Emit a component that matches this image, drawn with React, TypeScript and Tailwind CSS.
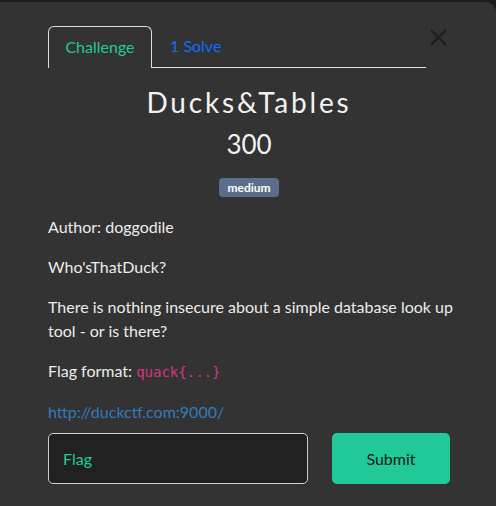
import React from "react";

export default function App() {
  return (
    <div className="w-[496px] h-[506px] bg-[#1b1b1b] overflow-hidden" style={{ fontFamily: "Lato, 'Noto Sans', sans-serif" }}>
      <div className="h-[2px] bg-[#1e1e1e]" />
      <div className="bg-[#333333] h-[504px] rounded-tr-[10px] pl-12 pr-[46px] pt-6">
        <div className="flex items-start">
          <div className="w-[378px] flex items-end border-b border-[#dedede]">
            <div className="border border-b-0 border-[#dedede] rounded-t-[6px] px-[16px] pt-[8px] pb-[9px] text-[16px] leading-6 text-[#20c997] -mb-px bg-[#333333] w-[104px] text-center">
              Challenge
            </div>
            <div className="pl-[18px] pr-4 pt-[8px] pb-[9px] text-[16px] leading-6 text-[#0d6efd]">1 Solve</div>
          </div>
          <div className="ml-1 mt-[3px] w-[17px] h-[17px] text-[#1e1e1e]">
            <svg viewBox="0 0 17 17" width="17" height="17" fill="none" stroke="currentColor" strokeWidth="2.2">
              <path d="M1 1 L16 16 M16 1 L1 16" />
            </svg>
          </div>
        </div>
        <div className="text-center mt-[17px]">
          <div className="text-[28px] leading-[34px] tracking-[2.8px] font-normal text-[#f2f2f2]">Ducks&amp;Tables</div>
          <div className="text-[26px] leading-[32px] text-[#f2f2f2] mt-[9px]">300</div>
          <div className="mt-[18px] flex justify-center">
            <span className="bg-[#5b6f8c] text-white text-[12px] h-[19px] leading-[19px] font-bold rounded-[4px] px-[8px]">medium</span>
          </div>
        </div>
        <div className="mt-[18px] text-[16px] leading-6 text-[#ececec] w-[410px]">
          <p className="mb-4">Author: doggodile</p>
          <p className="mb-4">Who'sThatDuck?</p>
          <p className="mb-4">There is nothing insecure about a simple database look up tool - or is there?</p>
          <p className="mb-4">
            Flag format:{" "}
            <code className="text-[14px] text-[#d63384]" style={{ fontFamily: "'DejaVu Sans Mono', monospace" }}>
              quack{"{...}"}
            </code>
          </p>
          <p className="text-[#337ab7]">http://duckctf.com:9000/</p>
        </div>
        <div className="flex mt-[9px] gap-6">
          <div className="w-[260px] h-[51px] border border-[#cfcfcf] rounded-[5px] bg-[#212121] flex items-center pl-[14px] text-[16px] text-[#20c997]">
            Flag
          </div>
          <div className="w-[118px] h-[51px] rounded-[5px] bg-[#20c997] flex items-center justify-center text-[16px] text-[#1a1a1a]">
            Submit
          </div>
        </div>
      </div>
    </div>
  );
}
